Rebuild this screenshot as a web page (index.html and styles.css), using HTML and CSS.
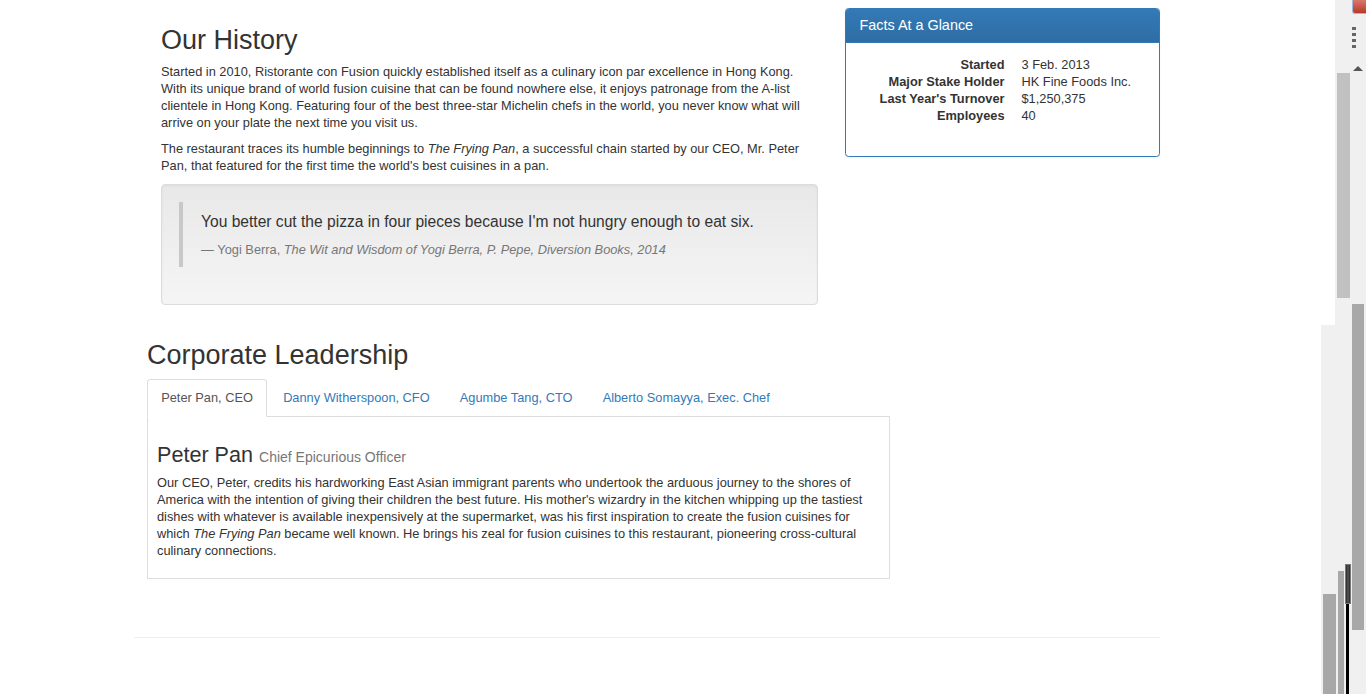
FILE: index.html
```html
<!DOCTYPE html>
<html lang="en">
<head>
<meta charset="utf-8">
<title>About Us - Ristorante con Fusion</title>
<link rel="stylesheet" href="styles.css">
</head>
<body>
<div class="page">
  <div class="container">
    <div class="row-history">
      <div class="col-main">
        <h2>Our History</h2>
        <p>Started in 2010, Ristorante con Fusion quickly established itself as a culinary icon par excellence in Hong Kong. With its unique brand of world fusion cuisine that can be found nowhere else, it enjoys patronage from the A-list clientele in Hong Kong. Featuring four of the best three-star Michelin chefs in the world, you never know what will arrive on your plate the next time you visit us.</p>
        <p>The restaurant traces its humble beginnings to <em>The Frying Pan</em>, a successful chain started by our CEO, Mr. Peter Pan, that featured for the first time the world's best cuisines in a pan.</p>
        <div class="well">
          <blockquote>
            <p>You better cut the pizza in four pieces because I'm not hungry enough to eat six.</p>
            <footer>Yogi Berra, <cite>The Wit and Wisdom of Yogi Berra, P. Pepe, Diversion Books, 2014</cite></footer>
          </blockquote>
        </div>
      </div>
      <div class="col-side">
        <div class="panel">
          <div class="panel-heading"><h3 class="panel-title">Facts At a Glance</h3></div>
          <div class="panel-body">
            <dl class="facts">
              <dt>Started</dt><dd>3 Feb. 2013</dd>
              <dt>Major Stake Holder</dt><dd>HK Fine Foods Inc.</dd>
              <dt>Last Year's Turnover</dt><dd>$1,250,375</dd>
              <dt>Employees</dt><dd>40</dd>
            </dl>
          </div>
        </div>
      </div>
    </div>

    <div class="row-leadership">
      <h2>Corporate Leadership</h2>
      <ul class="nav-tabs">
        <li class="active"><a href="#peter">Peter Pan, CEO</a></li>
        <li><a href="#danny">Danny Witherspoon, CFO</a></li>
        <li><a href="#agumbe">Agumbe Tang, CTO</a></li>
        <li><a href="#alberto">Alberto Somayya, Exec. Chef</a></li>
      </ul>
      <div class="tab-content">
        <h3>Peter Pan <small>Chief Epicurious Officer</small></h3>
        <p>Our CEO, Peter, credits his hardworking East Asian immigrant parents who undertook the arduous journey to the shores of America with the intention of giving their children the best future. His mother's wizardry in the kitchen whipping up the tastiest dishes with whatever is available inexpensively at the supermarket, was his first inspiration to create the fusion cuisines for which <em>The Frying Pan</em> became well known. He brings his zeal for fusion cuisines to this restaurant, pioneering cross-cultural culinary connections.</p>
      </div>
    </div>
    <hr class="rule">
  </div>
</div>

<div class="scraps" aria-hidden="true">
  <div class="scrap scrap-bg1"></div>
  <div class="scrap scrap-bg2"></div>
  <div class="scrap scrap-red"></div>
  <div class="scrap scrap-dots"></div>
  <div class="scrap scrap-arrow"></div>
  <div class="scrap scrap-thumb1"></div>
  <div class="scrap scrap-thumb2"></div>
  <div class="scrap scrap-bar1"></div>
  <div class="scrap scrap-bar2"></div>
  <div class="scrap scrap-black"></div>
  <div class="scrap scrap-dark"></div>
</div>
</body>
</html>
```

FILE: styles.css
```css
* { box-sizing: border-box; }

html, body {
  margin: 0;
  padding: 0;
  background: #fff;
  overflow: hidden;
}

body {
  font-family: "Liberation Sans", Arial, sans-serif;
  font-size: 12.8px;
  line-height: 17px;
  color: #333;
  width: 1366px;
  height: 694px;
  position: relative;
}

.page {
  padding-left: 134px;
}

.container {
  width: 1026px;
}

h2 {
  font-family: "Liberation Sans", Arial, sans-serif;
  font-size: 27px;
  font-weight: 500;
  line-height: 29.7px;
  margin: 18px 0 9px;
  color: #333;
}

p { margin: 0 0 9px; }

/* Section 1 */
.row-history {
  display: flex;
  gap: 27px;
  padding-top: 8px;
}

.col-main {
  width: 684px;
  padding-left: 27px;
}

.col-main h2 { margin-top: 18px; margin-bottom: 7px; }

.col-side {
  width: 315px;
}

.well {
  margin-top: 10px;
  margin-bottom: 18px;
  padding: 17px;
  border: 1px solid #dcdcdc;
  border-radius: 4px;
  background: linear-gradient(to bottom, #e8e8e8 0%, #f5f5f5 100%);
  box-shadow: inset 0 1px 3px rgba(0,0,0,.05), 0 1px 0 rgba(255,255,255,.1);
}

blockquote {
  margin: 0 0 20px;
  padding: 9px 18px;
  border-left: 4.5px solid #c8c8c8;
  font-size: 15.6px;
  line-height: 22.5px;
}

blockquote p { margin: 0 0 8px; }

blockquote footer {
  font-size: 12.8px;
  line-height: 17px;
  color: #777;
}

blockquote footer::before { content: "\2014 \00A0"; }

cite { font-style: italic; }

/* Panel */
.panel {
  border: 1px solid #337ab7;
  border-radius: 3.6px;
  background: #fff;
  box-shadow: 0 1px 2px rgba(0,0,0,.05);
}

.panel-heading {
  padding: 9px 13.5px;
  background: linear-gradient(to bottom, #337ab7 0%, #2e6da4 100%);
  border-bottom: 1px solid #337ab7;
  border-radius: 2.6px 2.6px 0 0;
}

.panel-title {
  margin: 0;
  font-size: 14.4px;
  font-weight: 500;
  line-height: 15px;
  color: #fff;
}

.panel-body {
  padding: 12.5px 13.5px 13.5px;
}

.facts {
  display: grid;
  grid-template-columns: 145px 1fr;
  column-gap: 17px;
  margin: 0 0 19px;
}

.facts dt {
  font-weight: 700;
  text-align: right;
  white-space: nowrap;
}

.facts dd { margin: 0; }

/* Section 2 */
.row-leadership {
  width: 756px;
  padding-left: 13px;
}

.row-leadership h2 { margin-top: 18px; margin-bottom: 8px; }

.nav-tabs {
  display: flex;
  list-style: none;
  margin: 0;
  padding: 0;
  border-bottom: 1px solid #ddd;
}

.nav-tabs li {
  margin-right: 1.8px;
  margin-bottom: -1px;
}

.nav-tabs a {
  display: block;
  padding: 9px 13.2px;
  line-height: 18px;
  border: 1px solid transparent;
  border-radius: 3.6px 3.6px 0 0;
  color: #337ab7;
  text-decoration: none;
}

.nav-tabs li.active a {
  color: #555;
  background: #fff;
  border-color: #ddd #ddd transparent;
}

.tab-content {
  border: 1px solid #ddd;
  border-top: none;
  padding: 9px 9px 10px;
}

.tab-content h3 {
  font-size: 21.6px;
  font-weight: 500;
  line-height: 23.8px;
  margin: 17px 0 4px;
}

.tab-content h3 small {
  font-size: 14px;
  font-weight: 400;
  color: #777;
}

.rule {
  margin: 58px 0 0;
  border: 0;
  border-top: 1px solid #eee;
}

/* Leftover window chrome at the right edge of the capture */
.scraps {
  position: absolute;
  top: 0;
  left: 0;
  width: 1366px;
  height: 694px;
  pointer-events: none;
}

.scrap { position: absolute; }

.scrap-bg1 { left: 1335px; top: 0; width: 31px; height: 325px; background: #f0f0f0; }
.scrap-bg2 { left: 1321px; top: 325px; width: 45px; height: 369px; background: #f0f0f0; }
.scrap-red { left: 1352px; top: 0; width: 14px; height: 14px; background: linear-gradient(#d9786b, #b8382a); border-left: 1px solid #9fb8d8; border-bottom: 1px solid #9fb8d8; border-radius: 0 0 0 3px; }
.scrap-dots { left: 1352px; top: 27px; width: 4px; height: 21px; background: repeating-linear-gradient(to bottom, #666 0 3px, transparent 3px 6px); }
.scrap-arrow { left: 1353px; top: 66px; width: 0; height: 0; border-left: 5px solid transparent; border-right: 5px solid transparent; border-bottom: 5px solid #555; }
.scrap-thumb1 { left: 1337px; top: 73px; width: 13px; height: 225px; background: #c1c1c1; }
.scrap-thumb2 { left: 1352px; top: 304px; width: 12px; height: 326px; background: #a8a8a8; }
.scrap-bar1 { left: 1323px; top: 594px; width: 13px; height: 100px; background: #a8a8a8; }
.scrap-bar2 { left: 1338px; top: 571px; width: 6px; height: 123px; background: #a8a8a8; }
.scrap-black { left: 1346px; top: 565px; width: 3px; height: 129px; background: #000; }
.scrap-dark { left: 1345px; top: 564px; width: 6px; height: 40px; background: linear-gradient(to right, #2a2a2a, #555, #2a2a2a); border: 1px solid #777; }
```
